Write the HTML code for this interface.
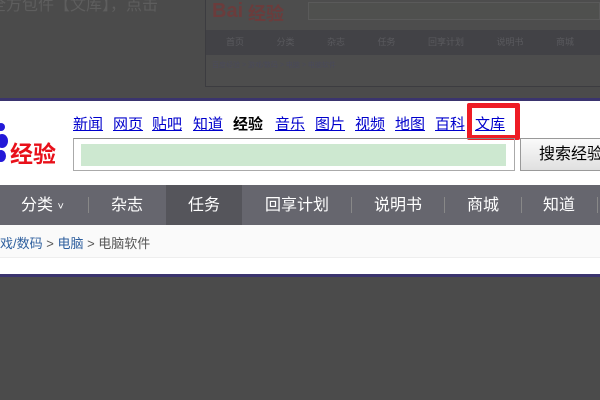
<!DOCTYPE html>
<html><head><meta charset="utf-8"><style>
*{margin:0;padding:0;box-sizing:border-box}
body{width:600px;height:400px;background:#4b4b4b;overflow:hidden;position:relative;font-family:"Liberation Sans","Noto Sans CJK SC",sans-serif}
.a{position:absolute}
.links a{color:#0000cc;text-decoration:underline;font-size:15px;margin-right:0}
</style></head><body>
<!-- faint top -->
<div class="a" style="left:-10px;top:-9px;color:#5e5e5e;font-size:16px;white-space:nowrap">全方包件【文库】，点击</div>
<div class="a" style="left:205px;top:-2px;width:400px;height:89px;border:1px solid #3c3c40;background:#4d4d4d"></div>
<div class="a" style="left:212px;top:0px;color:#6b3c3c;font-size:20px;font-weight:bold">Bai</div>
<div class="a" style="left:248px;top:0px;color:#6b3c3c;font-size:18px;font-weight:bold">经验</div>
<div class="a" style="left:308px;top:2px;width:292px;height:18px;background:#4f504e;border:1px solid #5a5a5a"></div>
<div class="a" style="left:206px;top:30px;width:394px;height:25px;background:#424246;color:#5a5a5e;font-size:9px;line-height:25px;white-space:nowrap;padding-left:20px;word-spacing:30px">首页 分类 杂志 任务 回享计划 说明书 商城</div>
<div class="a" style="left:212px;top:60px;color:#4a4a5a;font-size:7px">百度经验 &gt; 游戏/数码 &gt; 电脑 &gt; 电脑软件</div>
<!-- panel -->
<div class="a" style="left:0;top:98px;width:600px;height:3px;background:#3a346e"></div>
<div class="a" style="left:0;top:101px;width:600px;height:173px;background:#fff"></div>
<div class="a" style="left:0;top:274px;width:600px;height:3px;background:#3a346e"></div>
<!-- logo -->
<div class="a" style="left:-3px;top:123px;width:8px;height:8px;border-radius:50%;background:#2319d8"></div>
<div class="a" style="left:-4px;top:134px;width:12px;height:14px;border-radius:50%;background:#2319d8"></div>
<div class="a" style="left:-4px;top:150px;width:10px;height:12px;border-radius:50%;background:#2319d8"></div>
<div class="a" style="left:10px;top:135px;color:#e8101a;font-size:23px;font-weight:bold;letter-spacing:0px">经验</div>
<!-- links -->
<div class="a links" style="left:73px;top:113px;white-space:nowrap">
<a style="position:absolute;left:0">新闻</a><a style="position:absolute;left:40px">网页</a><a style="position:absolute;left:79px">贴吧</a><a style="position:absolute;left:120px">知道</a><span style="position:absolute;left:160px;font-size:15px;font-weight:bold;color:#000">经验</span><a style="position:absolute;left:202px">音乐</a><a style="position:absolute;left:242px">图片</a><a style="position:absolute;left:282px">视频</a><a style="position:absolute;left:322px">地图</a><a style="position:absolute;left:362px">百科</a><a style="position:absolute;left:402px">文库</a>
</div>
<div class="a" style="left:467px;top:103px;width:53px;height:37px;border:5px solid #ee1c25;border-radius:2px"></div>
<!-- search -->
<div class="a" style="left:73px;top:138px;width:442px;height:33px;border:1px solid #aaa;border-top-color:#888"></div>
<div class="a" style="left:81px;top:144px;width:425px;height:22px;background:#cde8d0"></div>
<div class="a" style="left:520px;top:138px;width:90px;height:33px;border:1px solid #999;background:linear-gradient(#fafafa,#e0e0e0);font-size:16px;line-height:31px;padding-left:18px;color:#000">搜索经验</div>
<!-- nav -->
<div class="a" style="left:0;top:185px;width:600px;height:40px;background:#66666e"></div>
<div class="a" style="left:166px;top:185px;width:76px;height:40px;background:#55555b"></div>
<div class="a" style="left:0;top:185px;height:40px;width:600px;color:#fff;font-size:16px;line-height:42px;white-space:nowrap">
<span class="a" style="left:21px">分类 <span style="font-size:11px">˅</span></span>
<span class="a" style="left:111px">杂志</span>
<span class="a" style="left:188px">任务</span>
<span class="a" style="left:265px">回享计划</span>
<span class="a" style="left:374px">说明书</span>
<span class="a" style="left:467px">商城</span>
<span class="a" style="left:543px">知道</span>
</div>
<div class="a" style="left:88px;top:197px;width:1px;height:16px;background:#888"></div>
<div class="a" style="left:351px;top:197px;width:1px;height:16px;background:#888"></div>
<div class="a" style="left:444px;top:197px;width:1px;height:16px;background:#888"></div>
<div class="a" style="left:521px;top:197px;width:1px;height:16px;background:#888"></div>
<div class="a" style="left:597px;top:197px;width:1px;height:16px;background:#888"></div>
<!-- breadcrumb -->
<div class="a" style="left:0;top:225px;width:600px;height:33px;background:#fafafa;border-bottom:1px solid #eee"></div>
<div class="a" style="left:0;top:233px;font-size:13px;color:#555;white-space:nowrap"><span style="color:#2e5f9e">戏/数码</span> &gt; <span style="color:#2e5f9e">电脑</span> &gt; 电脑软件</div>
</body></html>
